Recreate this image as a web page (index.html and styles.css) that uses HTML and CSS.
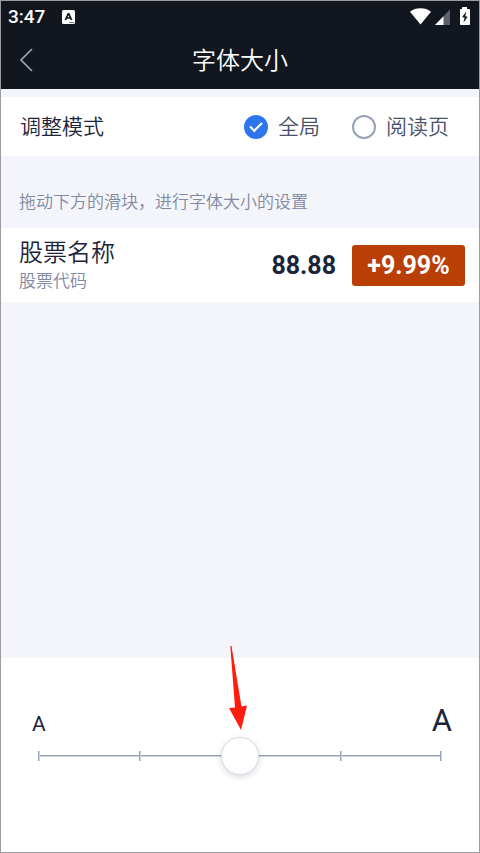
FILE: index.html
```html
<!DOCTYPE html>
<html lang="zh-CN">
<head>
<meta charset="utf-8">
<meta name="viewport" content="width=device-width, initial-scale=1">
<title>字体大小</title>
<link rel="stylesheet" href="styles.css">
</head>
<body>
<div class="app">
  <header class="top">
    <div class="status">
      <span class="clock">3:47</span>
      <svg class="badge" width="13" height="14" viewBox="0 0 13 14" aria-hidden="true">
        <rect width="13" height="14" rx="1.5" fill="#fff"/>
        <path d="M3.400 10 6.200 3.800h.6L9.600 10M4.600 8h3.900" fill="none" stroke="#12171f" stroke-width="1.700"/>
        <path d="M7 12.600h5" stroke="#777b82" stroke-width="1"/>
      </svg>
      <svg class="signals" width="62" height="20" viewBox="0 0 62 20" aria-hidden="true">
        <path d="M1 4.700C4 2.300 7.200 1.200 11.500 1.200S19 2.300 22 4.700L11.500 17.500Z" fill="#fff"/>
        <path d="M41 2.500V18H26Z" fill="#5d616b"/>
        <path d="M34.500 9.200V18H26Z" fill="#fff"/>
        <path d="M53 0h5v2h2.200c.5 0 .8.300.8.800V17c0 .6-.4 1-1 1h-8c-.6 0-1-.4-1-1V2.800c0-.5.300-.8.800-.8H53Z" fill="#fff"/>
        <path d="M57.300 4.500 53 10.300l2.600.3-1.200 5.200 4.300-6-2.400-.5Z" fill="#12171f"/>
      </svg>
    </div>
    <div class="nav">
      <button class="back" type="button" aria-label="返回">
        <svg width="14" height="24" viewBox="0 0 14 24" aria-hidden="true"><path d="M13 1 2 12l11 11" fill="none" stroke="#a0a7bd" stroke-width="1.600"/></svg>
      </button>
      <h1 class="title">字体大小</h1>
    </div>
  </header>
  <main class="content">
    <div class="mode" role="radiogroup" aria-labelledby="mode-label">
      <span class="mode-label" id="mode-label">调整模式</span>
      <label class="option"><input type="radio" name="mode" checked>全局</label>
      <label class="option"><input type="radio" name="mode">阅读页</label>
    </div>
    <p class="hint">拖动下方的滑块，进行字体大小的设置</p>
    <section class="stock">
      <div class="stock-info">
        <span class="stock-name">股票名称</span>
        <span class="stock-code">股票代码</span>
      </div>
      <span class="price">88.88</span>
      <span class="change">+9.99%</span>
    </section>
  </main>
  <section class="panel">
    <div class="sizes" aria-hidden="true"><span class="small">A</span><span class="large">A</span></div>
    <div class="slider">
      <div class="ticks"><i></i><i></i><i></i><i></i><i></i></div>
      <input class="range" type="range" min="0" max="4" value="2" aria-label="字体大小">
      <svg class="pointer" width="20" height="84" viewBox="0 0 20 84" aria-hidden="true"><path d="M2.300 0 3.500 0 13.500 60.500 19 59.500 13 84 1 62 7 61.500Z" fill="#ff1d0d"/></svg>
    </div>
  </section>
</div>
</body>
</html>
```
FILE: styles.css
```css
* { box-sizing: border-box; }

body {
  margin: 0;
  font-family: Roboto, "Noto Sans CJK SC", sans-serif;
  color: #1b2438;
}

.app {
  display: flex;
  flex-direction: column;
  min-height: 100vh;
  border: 1px solid #9b9ba0;
  background: #f4f5fa;
}

.top { background: #12171f; color: #fff; }

.status {
  display: flex;
  align-items: center;
  height: 32px;
  padding: 0 8px 0 7px;
}

.clock { font-size: 19px; font-weight: 500; line-height: 32px; }
.badge { margin-left: 17px; }
.signals { margin-left: auto; }

.nav {
  display: grid;
  grid-template-columns: 52px 1fr 52px;
  align-items: center;
  height: 56px;
}

.back {
  display: flex;
  align-items: center;
  height: 56px;
  padding: 0 0 2px 18px;
  border: 0;
  background: none;
}

.title {
  margin: 0;
  font-size: 24px;
  font-weight: 350;
  line-height: 56px;
  text-align: center;
}

.content { flex: 1; padding-top: 8px; font-weight: 350; }

.mode {
  display: flex;
  align-items: center;
  gap: 32px;
  height: 59px;
  padding: 0 30px 0 19px;
  background: #fff;
  font-size: 21px;
  line-height: 24px;
}

.mode-label { margin-right: auto; }

.option {
  display: flex;
  align-items: center;
  gap: 10px;
  color: #475168;
}

.option input {
  appearance: none;
  display: grid;
  place-items: center;
  width: 24px;
  height: 24px;
  margin: 0;
  border: 2px solid #98a1b8;
  border-radius: 50%;
}

.option input:checked { border-color: #2e75ee; background: #2e75ee; }

.option input:checked::after {
  content: "";
  width: 10px;
  height: 5px;
  margin-bottom: 3px;
  border: solid #fff;
  border-width: 0 0 2px 2px;
  transform: rotate(-45deg);
}

.hint {
  margin: 0;
  padding: 33px 18px 13px;
  font-size: 17px;
  line-height: 26px;
  color: #8089a2;
}

.stock {
  display: flex;
  align-items: center;
  height: 74px;
  padding: 0 14px 0 18px;
  background: #fff;
}

.stock-info { display: flex; flex-direction: column; margin-right: auto; }
.stock-name { font-size: 24px; line-height: 32px; }
.stock-code { font-size: 17px; line-height: 24px; color: #8089a2; }
.price { font-size: 25px; font-weight: 700; }

.change {
  min-width: 113px;
  margin-left: 16px;
  border-radius: 3px;
  background: #b93f06;
  color: #fff;
  font-size: 25px;
  font-weight: 700;
  line-height: 41px;
  text-align: center;
}

.panel {
  height: 194px;
  padding: 50px 37px 0;
  background: #fff;
}

.sizes {
  display: flex;
  justify-content: space-between;
  align-items: baseline;
  margin: 0 -10px 0 -6px;
  line-height: 26px;
}

.small { font-size: 21px; }
.large { font-size: 31px; }

.slider { position: relative; display: grid; align-items: center; }
.slider > .ticks, .slider > .range { grid-area: 1 / 1; }

.ticks {
  display: flex;
  justify-content: space-between;
  height: 10px;
  background: linear-gradient(#9aa3b6 50%, #cdd1dc 50%) center / 100% 2px no-repeat;
}

.ticks i {
  width: 2px;
  background: linear-gradient(90deg, #9aa3b6 50%, #cdd1dc 50%);
}

.range {
  appearance: none;
  height: 38px;
  margin: 0 -18px;
  background: none;
}

.range::-webkit-slider-thumb {
  appearance: none;
  width: 38px;
  height: 38px;
  border: 1px solid #d8dae5;
  border-radius: 50%;
  background: #fff;
  box-shadow: 0 2px 6px rgb(30 40 70 / 18%);
}

.pointer {
  position: absolute;
  bottom: 45px;
  left: calc(50% - 12px);
  pointer-events: none;
}
```
